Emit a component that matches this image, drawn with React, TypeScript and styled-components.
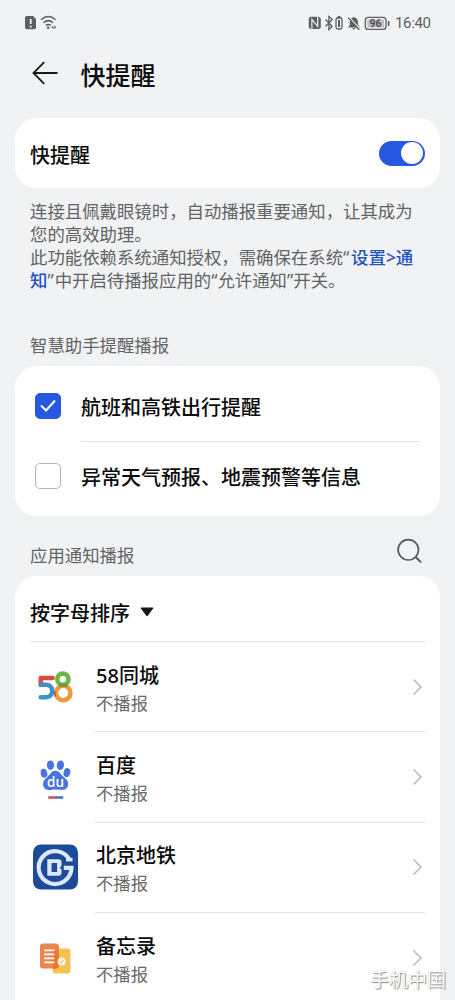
import React from "react";
import styled, { createGlobalStyle } from "styled-components";

const GlobalStyle = createGlobalStyle`
  * { box-sizing: border-box; }
  html, body { margin: 0; padding: 0; background: #f1f2f4; }
  body { overflow: hidden; }
`;

const Screen = styled.div`
  position: relative;
  width: 455px;
  height: 1000px;
  overflow: hidden;
  background: #f1f2f4;
  color: #0b0b0c;
  font-family: "Noto Sans", "Noto Sans CJK SC", sans-serif;
  display: flex;
  flex-direction: column;
`;

const StatusBar = styled.div`
  height: 46px;
  flex: none;
  display: flex;
  align-items: center;
  justify-content: space-between;
  padding: 0 25px 0 24px;
`;

const StatusRight = styled.div`
  display: flex;
  align-items: center;
`;

const Clock = styled.span`
  width: 35px;
  margin-left: 5px;
  font: 400 15px/20px Roboto, sans-serif;
  letter-spacing: -0.35px;
  white-space: nowrap;
  color: #5d5e60;
`;

const Header = styled.header`
  height: 72px;
  flex: none;
  display: flex;
  align-items: flex-start;
  padding: 13px 0 0 32px;
`;

const BackIcon = styled.svg`
  margin-top: 2px;
  flex: none;
`;

const Title = styled.h1`
  margin: 0 0 0 21.5px;
  font-size: 25px;
  line-height: 32px;
  font-weight: 500;
`;

const Card = styled.section<{ $height: number }>`
  flex: none;
  height: ${(p) => p.$height}px;
  margin: 0 15px;
  border-radius: 21px;
  background: #fff;
`;

const SwitchRow = styled.div`
  height: 70px;
  display: flex;
  align-items: center;
  justify-content: space-between;
  padding: 6px 15px 0;
`;

const ItemText = styled.span`
  font-size: 20px;
  line-height: 28px;
  font-weight: 500;
  white-space: nowrap;
`;

const Toggle = styled.span`
  width: 46px;
  height: 25px;
  margin-bottom: 6px;
  border-radius: 13px;
  background: #2658e2;
  display: flex;
  justify-content: flex-end;
  align-items: center;
  padding-right: 2px;
`;

const Knob = styled.i`
  width: 22px;
  height: 22px;
  border-radius: 50%;
  background: #fff;
`;

const Description = styled.p`
  flex: none;
  height: 145px;
  margin: 0 30px;
  padding-top: 12px;
  font-size: 17.4px;
  line-height: 23px;
  color: #626365;
  white-space: nowrap;
`;

const Link = styled.span`
  color: #2453be;
  font-weight: 500;
`;

const Quote = styled.span<{ $gap: number }>`
  letter-spacing: ${(p) => p.$gap}px;
`;

const SectionBar = styled.div<{ $height: number; $top: number }>`
  flex: none;
  height: ${(p) => p.$height}px;
  padding: ${(p) => p.$top}px 30px 0;
  display: flex;
  align-items: flex-start;
  justify-content: space-between;
`;

const SectionLabel = styled.h2`
  margin: 0;
  font-size: 17.4px;
  line-height: 24px;
  font-weight: 400;
  color: #626365;
`;

const SearchIcon = styled.svg`
  margin: -6px 1px 0 0;
`;

const CheckRow = styled.div`
  height: 70px;
  display: flex;
  align-items: center;
  padding-left: 20px;

  ${ItemText} {
    padding-top: 4px;
  }
`;

const CheckBox = styled.span<{ $checked?: boolean }>`
  width: 26px;
  height: 26px;
  margin-right: 20px;
  border-radius: 5px;
  border: 1.5px solid ${(p) => (p.$checked ? "#2658e2" : "#b4b4b6")};
  background: ${(p) => (p.$checked ? "#2658e2" : "#fff")};
  display: grid;
  place-items: center;
`;

const CheckList = styled.div`
  padding-top: 5px;
`;

const Divider = styled.hr<{ $left: number; $right: number }>`
  height: 1px;
  border: 0;
  margin: 0 ${(p) => p.$right}px -1px ${(p) => p.$left}px;
  background: #e4e4e5;
`;

const SortRow = styled.div`
  height: 65px;
  display: flex;
  align-items: center;
  gap: 10px;
  padding: 7px 15px 0;

  ${ItemText} {
    padding-top: 4px;
  }
`;

const AppRow = styled.div`
  height: 90.4px;
  display: flex;
  align-items: center;
  padding: 1px 17px 0 15px;
`;

const AppIcon = styled.svg`
  width: 50px;
  height: 50px;
  margin-right: 16px;
  flex: none;
`;

const AppText = styled.div`
  flex: 1;
  display: flex;
  flex-direction: column;
  padding-top: 4px;
`;

const AppState = styled.span`
  font-size: 17.35px;
  line-height: 26px;
  color: #68696b;
`;

const Watermark = styled.span`
  position: absolute;
  right: 9px;
  bottom: 6px;
  font-size: 19px;
  line-height: 28px;
  color: #fff;
  text-shadow: 1px 1px 1px #8d8d8d, 0 0 1px #b5b5b5;
`;

const Chevron = () => (
  <svg width="11" height="18" viewBox="0 0 11 18" fill="none" stroke="#bdbdbf" strokeWidth="1.7">
    <path d="M1.5 1.5 9 9l-7.5 7.5" />
  </svg>
);

const Icon58 = () => (
  <AppIcon viewBox="0 0 50 50" fill="none" strokeWidth="4.6">
    <path d="M22.5 16H10.8v7" stroke="#dc4a40" strokeLinejoin="round" strokeLinecap="round" />
    <path d="M10.8 22.8h5.3a6.2 6.2 0 0 1 0 12.4h-5.4" stroke="#438fc9" strokeLinecap="round" />
    <circle cx="33.3" cy="31" r="7.2" stroke="#ef9a3c" />
    <circle cx="32.9" cy="17.2" r="5.6" stroke="#68b843" />
    <path d="M29 24q4-2.1 8.2 0" stroke="#80913d" strokeWidth="3.4" />
    <path d="M24.8 29.2q-.6 3.2.5 5" stroke="#8d7450" strokeWidth="2" />
  </AppIcon>
);

const IconBaidu = () => (
  <AppIcon viewBox="0 0 50 50">
    <g fill="#4973df">
      <ellipse cx="14" cy="21.2" rx="3.3" ry="4.5" transform="rotate(-12 14 21.2)" />
      <ellipse cx="20.5" cy="13.2" rx="3.6" ry="4.8" />
      <ellipse cx="30.4" cy="13.2" rx="3.6" ry="4.8" transform="rotate(8 30.4 13.2)" />
      <ellipse cx="36.9" cy="20.6" rx="3.3" ry="4.5" transform="rotate(15 36.9 20.6)" />
      <path d="M25.4 18.7c4 0 5.2 3.6 8.3 6.2 3.2 2.8 5 4.6 4.4 8-.6 3.8-3.5 5.2-6.6 4.9-2.4-.3-3.8-.4-6.1-.4-2.5 0-3.8.4-6.1.5-3.4.2-5.8-1.6-6.2-4.9-.4-3.2 1.2-5.5 4.1-8 3.1-2.6 4.2-6.3 8.2-6.3Z" />
    </g>
    <text x="25.5" y="35.2" textAnchor="middle" fontFamily="Open Sans" fontSize="13.5" fontWeight="600" fill="#fff">du</text>
    <path d="M18.3 45.5H26" stroke="#dc5148" strokeWidth="2.6" />
    <path d="M25.5 45.5h7.7" stroke="#4973c8" strokeWidth="2.6" />
  </AppIcon>
);

const IconSubway = () => (
  <AppIcon viewBox="0 0 50 50">
    <rect x="3" y="2.5" width="45" height="45" rx="8" fill="#1e4b98" />
    <path d="M39.5 17.7A16.4 16.4 0 1 0 41.5 25.8H33.8" fill="none" stroke="#dbe8fd" strokeWidth="4.2" />
    <path d="M36 17.6h6.5" stroke="#dbe8fd" strokeWidth="3.6" />
    <path
      d="M17.3 17.2h11.2q3 0 3 3v3.6l-1.8 1.9 1.8 1.9v3.2q0 3-3 3H17.3ZM21.6 21v9h5.2v-9Z"
      fill="#dbe8fd"
      fillRule="evenodd"
    />
    <path d="M26.3 21v9" stroke="#1e4b98" strokeWidth="1.6" />
  </AppIcon>
);

const IconMemo = () => (
  <AppIcon viewBox="0 0 50 50">
    <rect x="22.5" y="15.5" width="18" height="25" rx="3" fill="#f2c44f" />
    <rect x="10" y="10.5" width="19" height="25" rx="3" fill="#e9864e" />
    <path d="M22.5 17.5H29v15q0 3-3 3h-3.5Z" fill="#e87830" />
    <path d="M14.3 17.3h10M14.3 21.3h10M14.3 25.3h10M14.3 29.3h10" stroke="#fff" strokeWidth="1.7" />
    <circle cx="31.6" cy="28.5" r="4" fill="#fff8e6" />
    <path d="m29.7 28.8 1.3 1.3 2.7-3.4" stroke="#ddb04d" fill="none" />
  </AppIcon>
);

const apps = [
  { name: "58同城", Icon: Icon58 },
  { name: "百度", Icon: IconBaidu },
  { name: "北京地铁", Icon: IconSubway },
  { name: "备忘录", Icon: IconMemo },
];

export default function App() {
  return (
    <>
      <GlobalStyle />
      <Screen>
        <StatusBar>
          <svg width="34" height="16" viewBox="0 0 34 16" fill="none" stroke="#5d5e60">
            <path d="M2.8 1h6.3L12 4v8.2q0 2-2 2H3q-2 0-2-2V3q0-2 1.8-2Z" fill="#5d5e60" stroke="none" />
            <path d="M6.7 4v5M6.7 10.7v1.7" stroke="#fff" strokeWidth="1.7" />
            <path d="M17 4.7q7.3-6.3 14.6 0M19.5 7.7q4.8-4.1 9.6 0M21.8 10.4q2.5-2 5 0" strokeWidth="1.5" />
            <circle cx="24.2" cy="12.7" r="1.3" fill="#5d5e60" stroke="none" />
            <path d="m29.3 10.5-2 1.8 2 1.8ZM30.3 10.5l2 1.8-2 1.8Z" fill="#5d5e60" stroke="none" />
          </svg>
          <StatusRight>
            <svg width="83" height="18" viewBox="0 0 83 18" fill="none" stroke="#5d5e60">
              <rect x="1.8" y="2.8" width="12" height="12.2" rx="2.5" fill="#5d5e60" stroke="none" />
              <path d="M4.9 14.8V5.4l5.8 7V3" stroke="#f1f2f4" strokeWidth="1.2" />
              <path d="m18.5 5.5 6.7 7-3.3 3v-13l3.3 3-6.7 7" strokeWidth="1.3" />
              <rect x="29" y="4" width="6" height="11" rx="1.8" strokeWidth="1.3" />
              <path d="M30.6 3h2.8M32 6v7" strokeWidth="2" />
              <path d="M41 13.4h12l-2-2.4V7.8Q50.4 3.6 46.8 3.2 43.2 3.6 42.8 7.8V11ZM45 14.2h3.7q-1.8 2.5-3.7 0Z" fill="#5d5e60" stroke="none" />
              <path d="m42 3 11 12" stroke="#f1f2f4" strokeWidth="1.2" />
              <path d="m41 3.6 11.2 12.2" strokeWidth="1.4" />
              <rect x="58.3" y="3.4" width="20.7" height="12" rx="3" strokeWidth="1.3" />
              <rect x="60.3" y="5.4" width="16.7" height="8" rx="1" fill="#bfc0c2" stroke="none" />
              <path d="M81.6 7v5" strokeWidth="1.6" />
              <text x="68.6" y="13.1" textAnchor="middle" fontFamily="Roboto" fontWeight="700" fontSize="10.5" fill="#4d4e50" stroke="none">96</text>
            </svg>
            <Clock>16:40</Clock>
          </StatusRight>
        </StatusBar>

        <Header>
          <BackIcon width="27" height="26" viewBox="0 0 27 26" fill="none" stroke="#18191b" strokeWidth="1.8">
            <path d="M25.5 12H2M12.2 1.2 1.5 12l10.7 10.8" />
          </BackIcon>
          <Title>快提醒</Title>
        </Header>

        <Card $height={70}>
          <SwitchRow>
            <ItemText>快提醒</ItemText>
            <Toggle><Knob /></Toggle>
          </SwitchRow>
        </Card>

        <Description>
          连接且佩戴眼镜时，自动播报重要通知，让其成为<br />
          您的高效助理。<br />
          此功能依赖系统通知授权，需确保在系统<Quote $gap={1.8}>“</Quote><Link>设置&gt;通<br />知</Link><Quote $gap={1}>”</Quote>中开启待播报应用的<Quote $gap={0}>“</Quote>允许通知<Quote $gap={0}>”</Quote>开关。
        </Description>

        <SectionBar $height={33} $top={0}>
          <SectionLabel>智慧助手提醒播报</SectionLabel>
        </SectionBar>

        <Card $height={150}>
          <CheckList>
            <CheckRow>
              <CheckBox $checked>
                <svg width="18" height="14" viewBox="0 0 18 14" fill="none" stroke="#fff" strokeWidth="2">
                  <path d="m2 6.5 5 5 9-10" />
                </svg>
              </CheckBox>
              <ItemText>航班和高铁出行提醒</ItemText>
            </CheckRow>
            <Divider $left={66} $right={20} />
            <CheckRow>
              <CheckBox />
              <ItemText>异常天气预报、地震预警等信息</ItemText>
            </CheckRow>
          </CheckList>
        </Card>

        <SectionBar $height={60} $top={27}>
          <SectionLabel>应用通知播报</SectionLabel>
          <SearchIcon width="28" height="28" viewBox="0 0 28 28" fill="none" stroke="#55565a" strokeWidth="1.6">
            <circle cx="12.3" cy="12.8" r="10.2" />
            <path d="m19.8 20.2 5.3 5.2" strokeWidth="2" />
          </SearchIcon>
        </SectionBar>

        <Card $height={450}>
          <SortRow>
            <ItemText>按字母排序</ItemText>
            <svg width="14" height="10" viewBox="0 0 14 10"><path d="M1.2.5h11.6q1 0 .3 1L7.7 8.8q-.7.9-1.4 0L.9 1.5Q.2.5 1.2.5Z" fill="#141416" /></svg>
          </SortRow>
          {apps.map(({ name, Icon }, i) => (
            <React.Fragment key={name}>
              <Divider $left={i === 0 ? 15 : 80} $right={15} />
              <AppRow>
                <Icon />
                <AppText>
                  <ItemText>{name}</ItemText>
                  <AppState>不播报</AppState>
                </AppText>
                <Chevron />
              </AppRow>
            </React.Fragment>
          ))}
        </Card>
        <Watermark>手机中国</Watermark>
      </Screen>
    </>
  );
}
